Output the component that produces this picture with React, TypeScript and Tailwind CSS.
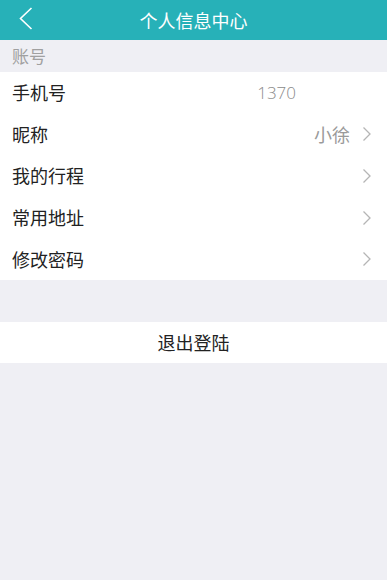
const rows = [
  { key: 'phone', label: '手机号', value: '1370', arrow: false },
  { key: 'nick', label: '昵称', value: '小徐', arrow: true },
  { key: 'trip', label: '我的行程', value: '', arrow: true },
  { key: 'addr', label: '常用地址', value: '', arrow: true },
  { key: 'pwd', label: '修改密码', value: '', arrow: true },
];

function Arrow() {
  return (
    <svg width="10" height="16" viewBox="0 0 10 16" className="ml-[12px]">
      <path d="M1.5 1.5 L8 8 L1.5 14.5" fill="none" stroke="#b5b5b5" strokeWidth="1.3" />
    </svg>
  );
}

export default function App() {
  return (
    <div
      className="w-[387px] h-[580px] bg-[#efeff4] flex flex-col"
      style={{ fontFamily: '"Noto Sans CJK SC", "Noto Sans", sans-serif' }}
    >
      {/* Header */}
      <div className="h-[40px] bg-[#27b1b8] flex items-center relative">
        <svg width="14" height="24" viewBox="0 0 14 24" className="absolute left-[19px] top-[7px]">
          <path d="M12.5 1 L1.5 11.5 L12.5 22" fill="none" stroke="#fff" strokeWidth="1.6" />
        </svg>
        <div className="flex-1 text-center text-white text-[18px] leading-none">个人信息中心</div>
      </div>

      {/* Section label */}
      <div className="h-[32px] flex items-center px-[12px] text-[17px] text-[#a0a0a0]">账号</div>

      {/* List */}
      <div className="bg-white flex flex-col">
        {rows.map((r) => (
          <div key={r.key} className="h-[41.6px] flex items-center pl-[12px] pr-[15px]">
            <span className="flex-1 text-[18px] text-[#222]">{r.label}</span>
            {r.key === 'phone' ? (
              <span
                className="text-[17px] text-[#8a8a8a] mr-[76px]"
                style={{ fontFamily: '"Open Sans", sans-serif', fontWeight: 300 }}
              >
                {r.value}
              </span>
            ) : (
              r.value && <span className="text-[18px] text-[#9a9a9a]">{r.value}</span>
            )}
            {r.arrow && <Arrow />}
          </div>
        ))}
      </div>

      <div className="h-[42px]" />

      {/* Logout */}
      <div className="h-[41px] bg-white flex items-center justify-center text-[18px] text-[#222]">退出登陆</div>
    </div>
  );
}
